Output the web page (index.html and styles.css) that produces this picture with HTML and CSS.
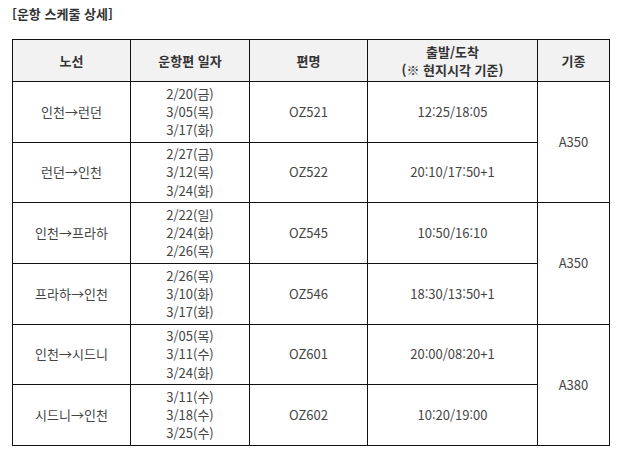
FILE: index.html
```html
<!DOCTYPE html>
<html lang="ko">
<head>
<meta charset="utf-8">
<link rel="stylesheet" href="styles.css">
</head>
<body>
<div class="page">
  <h2 class="title">[운항 스케줄 상세]</h2>
  <table class="sched">
    <colgroup>
      <col class="c1"><col class="c2"><col class="c3"><col class="c4"><col class="c5">
    </colgroup>
    <thead>
      <tr>
        <th>노선</th>
        <th>운항편 일자</th>
        <th>편명</th>
        <th>출발/도착<br>(※ 현지시각 기준)</th>
        <th>기종</th>
      </tr>
    </thead>
    <tbody>
      <tr>
        <td>인천→런던</td>
        <td>2/20(금)<br>3/05(목)<br>3/17(화)</td>
        <td>OZ521</td>
        <td>12:25/18:05</td>
        <td rowspan="2">A350</td>
      </tr>
      <tr>
        <td>런던→인천</td>
        <td>2/27(금)<br>3/12(목)<br>3/24(화)</td>
        <td>OZ522</td>
        <td>20:10/17:50+1</td>
      </tr>
      <tr>
        <td>인천→프라하</td>
        <td>2/22(일)<br>2/24(화)<br>2/26(목)</td>
        <td>OZ545</td>
        <td>10:50/16:10</td>
        <td rowspan="2">A350</td>
      </tr>
      <tr>
        <td>프라하→인천</td>
        <td>2/26(목)<br>3/10(화)<br>3/17(화)</td>
        <td>OZ546</td>
        <td>18:30/13:50+1</td>
      </tr>
      <tr>
        <td>인천→시드니</td>
        <td>3/05(목)<br>3/11(수)<br>3/24(화)</td>
        <td>OZ601</td>
        <td>20:00/08:20+1</td>
        <td rowspan="2">A380</td>
      </tr>
      <tr>
        <td>시드니→인천</td>
        <td>3/11(수)<br>3/18(수)<br>3/25(수)</td>
        <td>OZ602</td>
        <td>10:20/19:00</td>
      </tr>
    </tbody>
  </table>
</div>
</body>
</html>
```
FILE: styles.css
```css
html, body {
  margin: 0;
  padding: 0;
  background: #fff;
}
.page {
  padding: 5px 12px 0 12px;
  font-family: "Noto Sans CJK KR", "Noto Sans", "DejaVu Sans", sans-serif;
  color: #333;
  font-size: 13px;
}
.title {
  margin: 0 0 16px 0;
  font-size: 13px;
  line-height: 18px;
  font-weight: bold;
  color: #333;
}
.sched {
  border-collapse: collapse;
  width: 597px;
  table-layout: fixed;
}
.c1 { width: 118px; }
.c2 { width: 119px; }
.c3 { width: 118px; }
.c4 { width: 170px; }
.c5 { width: 72px; }
.sched th, .sched td {
  border: 1px solid #111;
  text-align: center;
  vertical-align: middle;
  padding: 0 4px;
  font-size: 13px;
}
.sched th {
  background: #f2f2f2;
  font-weight: bold;
  line-height: 18px;
  height: 42px;
  box-sizing: border-box;
  color: #333;
}
.sched td {
  line-height: 18.2px;
  height: 60.7px;
  box-sizing: border-box;
  color: #444;
}
```
